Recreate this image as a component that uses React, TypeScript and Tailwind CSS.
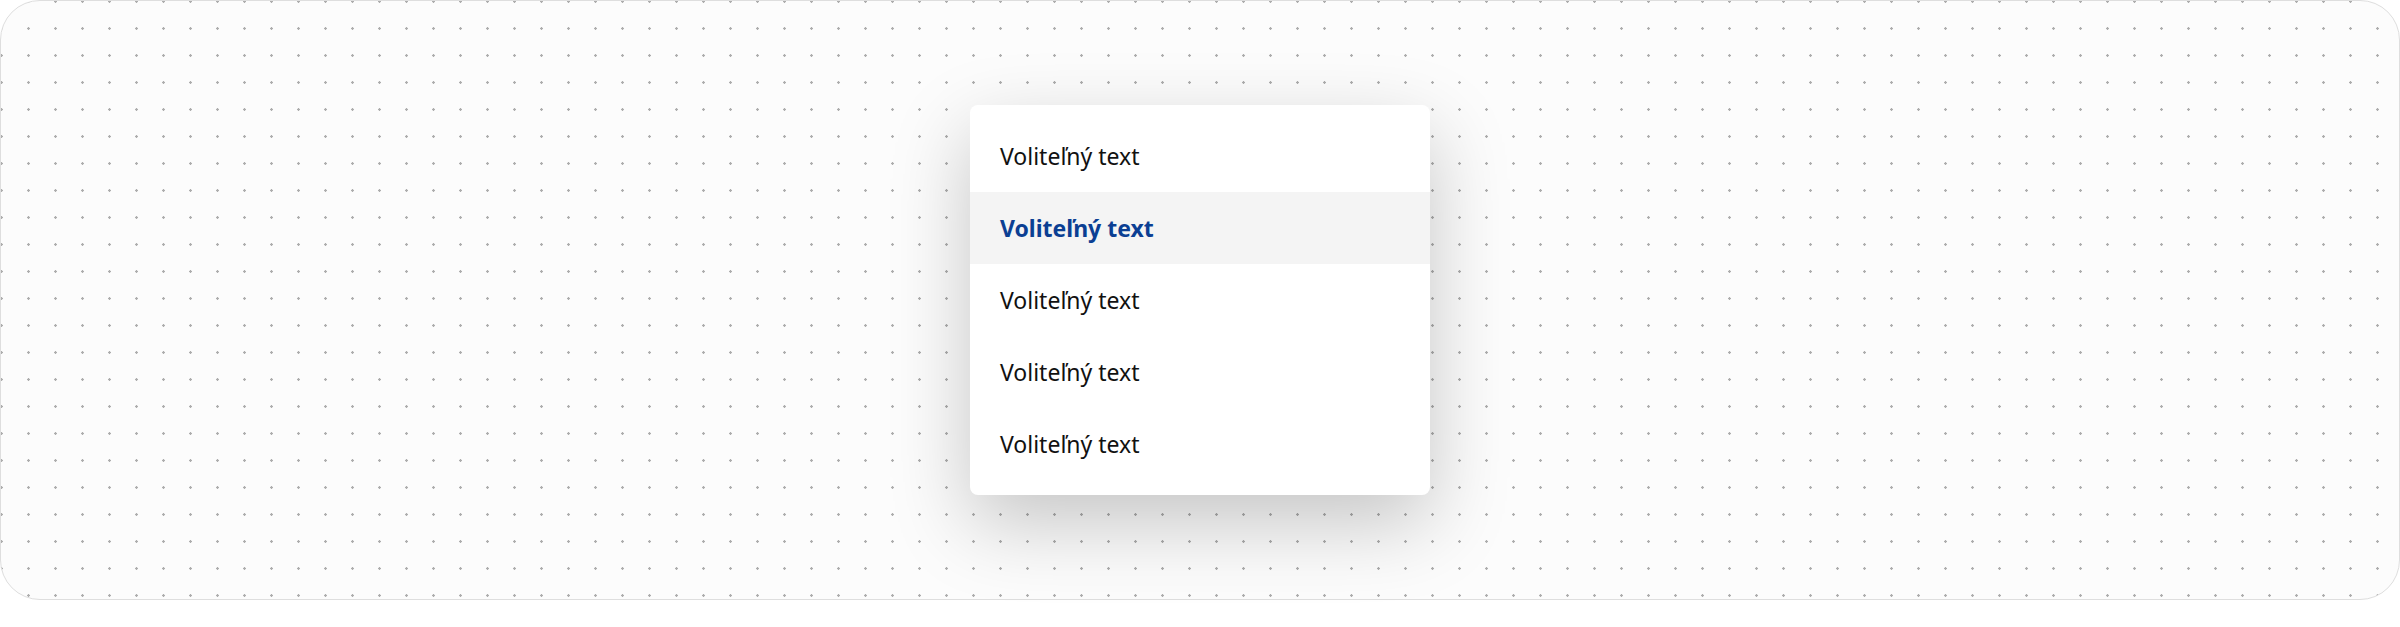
const items = ["Voliteľný text", "Voliteľný text", "Voliteľný text", "Voliteľný text", "Voliteľný text"];

export default function App() {
  return (
    <div className="w-[2400px] h-[627px] bg-white">
      <div className="h-[600px] rounded-[40px] border border-[#dedede] bg-[#fcfcfc] bg-[radial-gradient(circle,#adadad_1px,transparent_1.5px)] bg-[length:27px_27px] bg-[position:-13px_-13px] flex justify-center pt-[104px]">
        <div className="w-[460px] h-[390px] bg-white rounded-[8px] py-[15px] shadow-[0_28px_80px_rgba(0,0,0,0.22)] font-['Noto_Sans',sans-serif]">
          {items.map((label, i) => (
            <div
              key={i}
              className={`h-[72px] flex items-center pl-[30px] text-[23px] ${
                i === 1 ? "bg-[#f4f4f4] font-bold text-[#0b3f93]" : "text-[#111]"
              }`}
            >
              {label}
            </div>
          ))}
        </div>
      </div>
    </div>
  );
}
